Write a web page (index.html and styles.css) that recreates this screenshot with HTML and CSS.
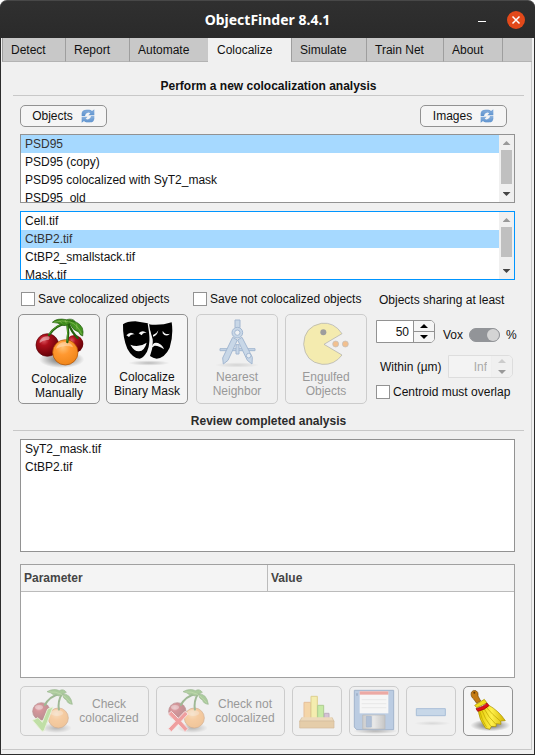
FILE: index.html
```html
<!DOCTYPE html>
<html lang="en">
<head>
<meta charset="utf-8">
<title>ObjectFinder 8.4.1</title>
<link rel="stylesheet" href="styles.css">
</head>
<body>
<svg class="defs" aria-hidden="true">
  <defs>
    <radialGradient id="red" cx=".35" cy=".3" r=".75"><stop offset="0" stop-color="#dc5560"/><stop offset=".3" stop-color="#ad101b"/><stop offset="1" stop-color="#600006"/></radialGradient>
    <radialGradient id="orange" cx=".4" cy=".3" r=".75"><stop offset="0" stop-color="#ffc276"/><stop offset=".4" stop-color="#ff9830"/><stop offset="1" stop-color="#ee8418"/></radialGradient>
    <radialGradient id="shade"><stop offset="0" stop-color="#000" stop-opacity=".6"/><stop offset="1" stop-color="#000" stop-opacity="0"/></radialGradient>
    <linearGradient id="blue" x2="0" y2="1"><stop offset="0" stop-color="#8fb4df"/><stop offset="1" stop-color="#5a90cc"/></linearGradient>
    <linearGradient id="straw"><stop offset="0" stop-color="#e3c800"/><stop offset=".5" stop-color="#fff04a"/><stop offset="1" stop-color="#d3b400"/></linearGradient>
    <linearGradient id="metal"><stop offset="0" stop-color="#999"/><stop offset=".5" stop-color="#ddd"/><stop offset="1" stop-color="#888"/></linearGradient>
  </defs>
  <symbol id="refresh" viewBox="0 0 42 42">
    <path d="M2 21V13Q3 2 15 2h10q5 0 8 4l7-5v18H22l6-6q-4-3-8-2-7 1-8 10z" fill="url(#blue)"/>
    <path d="M40 21v8q-1 11-13 11H17q-5 0-8-4l-7 5V23h18l-6 6q4 3 8 2 7-1 8-10z" fill="url(#blue)"/>
    <path d="M4 15Q6 4 17 4h8q5 1 8 5l5-4M38 28q-2 10-12 10h-9q-5 0-8-5" fill="none" stroke="#6b9bd2" stroke-width="2"/>
  </symbol>
  <symbol id="stems" viewBox="0 0 156 162">
    <path d="M44 57Q62 28 96 22M99 78Q104 50 99 22M130 66Q112 48 102 22" fill="none" stroke="#245f0d" stroke-width="7" stroke-linecap="round"/>
    <path d="M44 55Q62 27 96 21M98 76Q102 50 98 22" fill="none" stroke="#55a32b" stroke-width="3"/>
    <path d="M54 19Q68 5 96 11Q115 6 123 17Q116 20 108 20Q94 34 82 26Q70 20 54 19Z" fill="#3f8c1b" stroke="#215c0c" stroke-width="2"/>
    <path d="M101 15Q132 13 144 36Q148 48 145 60Q136 57 133 48Q116 43 109 27Z" fill="#459522" stroke="#215c0c" stroke-width="2"/>
    <path d="M58 19Q82 11 108 18Q130 26 142 55M75 14l8 8M92 12l4 10M127 23l1 17" fill="none" stroke="#a4cf6c" stroke-width="1.5"/>
  </symbol>
  <symbol id="cherries" viewBox="-4 0 156 162">
    <ellipse cx="82" cy="130" rx="68" ry="26" fill="url(#shade)"/>
    <circle cx="120" cy="84" r="27" fill="url(#red)"/>
    <circle cx="39" cy="87" r="34" fill="url(#red)" stroke="#5a0006" stroke-width="2"/>
    <path d="M16 74Q25 60 42 61Q50 66 42 72Q28 70 16 81Z" fill="#fff" opacity=".45"/>
    <circle cx="93" cy="109" r="38" fill="url(#orange)" stroke="#a84b00" stroke-width="2"/>
    <path d="M65 98Q72 77 94 78Q113 81 116 94Q91 84 65 98Z" fill="#fff" opacity=".35"/>
    <use href="#stems" width="156" height="162"/>
  </symbol>
  <symbol id="cherry-pair" viewBox="0 0 126 132">
    <ellipse cx="76" cy="117" rx="46" ry="15" fill="url(#shade)"/>
    <circle cx="31" cy="67" r="26" fill="url(#red)" stroke="#6d0007" stroke-width="2"/>
    <ellipse cx="24" cy="55" rx="12" ry="7" fill="#fff" opacity=".4"/>
    <circle cx="82" cy="87" r="30" fill="url(#orange)" stroke="#a84b00" stroke-width="2"/>
    <ellipse cx="78" cy="72" rx="19" ry="9" fill="#fff" opacity=".3"/>
    <path d="M40 50Q56 20 89 14M84 64Q79 36 93 15" fill="none" stroke="#28690f" stroke-width="6"/>
    <path d="M48 8Q68-3 85 5Q98-2 106 10Q91 18 84 21Q75 15 67 17Q62 11 48 8ZM94 15Q119 13 124 46Q109 44 107 34Q96 29 94 15Z" fill="#459522" stroke="#28690f" stroke-width="2"/>
    <path d="M55 9Q91 5 119 41" fill="none" stroke="#a4cf6c" stroke-width="1.5"/>
  </symbol>
</svg>

<header class="titlebar">
  <h1 class="title">ObjectFinder 8.4.1</h1>
  <div class="window-buttons">
    <button class="minimize" aria-label="Minimize"></button>
    <button class="close" aria-label="Close"><svg viewBox="0 0 18 18"><path d="M5.500 5.500l7 7m0-7l-7 7" stroke="#fff" stroke-width="1.500"/></svg></button>
  </div>
</header>

<div class="window">
  <nav class="tabs" role="tablist">
    <button class="tab detect" role="tab">Detect</button>
    <button class="tab report" role="tab">Report</button>
    <button class="tab automate" role="tab">Automate</button>
    <button class="tab colocalize selected" role="tab" aria-selected="true">Colocalize</button>
    <button class="tab simulate" role="tab">Simulate</button>
    <button class="tab train" role="tab">Train Net</button>
    <button class="tab about" role="tab">About</button>
    <span class="tab-rest"></span>
  </nav>

  <main class="panel">
    <h2 class="heading">Perform a new colocalization analysis</h2>
    <div class="toolbar">
      <button class="button refresh">Objects<svg><use href="#refresh"/></svg></button>
      <button class="button refresh">Images<svg><use href="#refresh"/></svg></button>
    </div>

    <div class="list short">
      <select size="4" aria-label="Objects">
        <option selected>PSD95</option>
        <option>PSD95 (copy)</option>
        <option>PSD95 colocalized with SyT2_mask</option>
        <option>PSD95_old</option>
      </select>
      <div class="scrollbar" aria-hidden="true"><i class="up"></i><i class="thumb"></i><i class="down"></i></div>
    </div>
    <div class="list short focused">
      <select size="4" aria-label="Images">
        <option>Cell.tif</option>
        <option selected>CtBP2.tif</option>
        <option>CtBP2_smallstack.tif</option>
        <option>Mask.tif</option>
      </select>
      <div class="scrollbar" aria-hidden="true"><i class="up"></i><i class="thumb small"></i><i class="down"></i></div>
    </div>

    <section class="options">
      <div class="actions">
        <div class="group">
          <label class="check"><input type="checkbox">Save colocalized objects</label>
          <div class="pair">
            <button class="button tile low">
              <svg class="cherries"><use href="#cherries"/></svg>
              <span>Colocalize<br>Manually</span>
            </button>
            <button class="button tile">
              <svg viewBox="0 0 156 144">
                <ellipse cx="84" cy="132" rx="62" ry="8" fill="url(#shade)" opacity=".4"/>
                <path d="M82 16Q118 21 152 10Q158 47 146 86Q132 116 107 119Q96 117 87 111Q97 86 95 61Z" fill="#000"/>
                <path d="M6 16Q17 7 43 7L71 11Q82 11 86 17Q90 70 78 98Q67 117 56 119Q34 117 19 89Q5 57 6 16Z" fill="#000"/>
                <path d="M82 13Q90 60 88 83Q82 107 68 118" fill="none" stroke="#f5f5f5" stroke-width="4"/>
                <path d="M16 49Q28 35 41 46Q29 44 24 54ZM53 43Q65 31 77 42Q66 38 62 49ZM96 48Q107 45 112 34Q108 52 96 53ZM125 35Q132 49 147 44Q134 56 125 43ZM28 77Q52 88 77 71Q71 95 54 97Q40 98 28 77ZM92 86Q95 67 111 72Q126 79 129 91Q113 79 101 80Z" fill="#f5f5f5"/>
              </svg>
              <span>Colocalize<br>Binary Mask</span>
            </button>
          </div>
        </div>
        <div class="group second">
          <label class="check"><input type="checkbox">Save not colocalized objects</label>
          <div class="pair">
            <button class="button tile" disabled>
              <svg viewBox="0 0 156 144">
                <ellipse cx="78" cy="138" rx="66" ry="8" fill="url(#shade)" opacity=".5"/>
                <g fill="#8fb3dc" stroke="#3265a4" stroke-width="3">
                  <path d="M27 89h105v6H27z"/>
                  <path d="M65 55L35 117l2 18 14-11 28-61zM93 55l31 60-1 20-14-11-29-61z"/>
                  <path d="M72 3h15v23H72z"/><circle cx="79" cy="41" r="16"/><circle cx="79" cy="41" r="8" fill="#eef3f8"/>
                  <path d="M75 77h9v28h-9z"/><circle cx="113" cy="110" r="7" fill="#dce8f5"/>
                </g>
              </svg>
              <span>Nearest<br>Neighbor</span>
            </button>
            <button class="button tile" disabled>
              <svg viewBox="0 0 156 144">
                <path d="M72 76L126 44Q102 8 64 13Q12 23 11 76Q15 129 66 136Q103 139 126 108Z" fill="#fbe54f" stroke="#444" stroke-width="2"/>
                <circle cx="70" cy="40" r="9" fill="#222"/>
                <circle cx="107" cy="75" r="9" fill="#f57900" stroke="#777" stroke-width="2"/><circle cx="136" cy="75" r="9" fill="#f57900" stroke="#777" stroke-width="2"/>
              </svg>
              <span>Engulfed<br>Objects</span>
            </button>
          </div>
        </div>
      </div>

      <div class="criteria">
        <div class="caption">Objects sharing at least</div>
        <div class="line">
          <div class="spinner"><input type="text" inputmode="numeric" value="50" aria-label="Objects sharing at least"><div class="steps"><button aria-label="Increase"><i class="up"></i></button><button aria-label="Decrease"><i class="down"></i></button></div></div>
          <label class="unit">Vox<input class="switch" type="checkbox" role="switch" checked>%</label>
        </div>
        <div class="line within">
          <label for="within">Within (µm)</label>
          <div class="spinner disabled"><input id="within" type="text" value="Inf" disabled><div class="steps"><button disabled aria-label="Increase distance"><i class="up"></i></button><button disabled aria-label="Decrease distance"><i class="down"></i></button></div></div>
        </div>
        <label class="check"><input type="checkbox">Centroid must overlap</label>
      </div>
    </section>

    <h2 class="heading review">Review completed analysis</h2>
    <div class="list tall">
      <select size="6" aria-label="Completed analysis">
        <option>SyT2_mask.tif</option>
        <option>CtBP2.tif</option>
      </select>
    </div>
    <div class="table-box">
      <table>
        <thead><tr><th scope="col">Parameter</th><th scope="col">Value</th></tr></thead>
        <tbody></tbody>
      </table>
    </div>

    <footer class="footer">
      <button class="button wide" disabled>
        <svg viewBox="0 0 126 132"><use href="#cherry-pair"/><path d="M5 94l16-8 13 14L50 60l16-6-27 71-6 2z" fill="#79c83a" stroke="#d8f0b0" stroke-width="3"/></svg>
        <span>Check<br>colocalized</span>
      </button>
      <button class="button wide" disabled>
        <svg viewBox="0 0 126 132"><use href="#cherry-pair"/><path d="M4 75l9-8 21 21 20-21 9 8-20 22 20 22-9 9-20-22-21 22-9-9 21-22z" fill="#ef2929" stroke="#ffd0d0" stroke-width="3"/></svg>
        <span>Check not<br>colocalized</span>
      </button>
      <button class="button square" disabled aria-label="Chart">
        <svg viewBox="0 0 144 144">
          <path d="M33 46h20v52H33z" fill="#fcaf3e" stroke="#d9791b" stroke-width="3"/><path d="M54 28h19v70H54z" fill="#fce94f" stroke="#c4a000" stroke-width="3"/><path d="M74 55h18v43H74z" fill="#8ae234" stroke="#4e9a06" stroke-width="3"/><path d="M94 79h14v18H94z" fill="#ad7fa8" stroke="#75507b" stroke-width="3"/>
          <path d="M27 91l-7 12h103l-6-12" fill="#e9b96e" stroke="#a46b1a" stroke-width="2"/><path d="M20 102h103v21H20z" fill="#d79a42" stroke="#a46b1a" stroke-width="2"/>
        </svg>
      </button>
      <button class="button square" disabled aria-label="Save">
        <svg viewBox="0 0 144 144">
          <ellipse cx="76" cy="132" rx="66" ry="9" fill="url(#shade)"/>
          <path d="M13 10h118v118H20l-7-8z" fill="#6e98cf" stroke="#315d98" stroke-width="3"/>
          <path d="M29 13h86v66H29z" fill="#fff"/><path d="M29 13h86v10H29z" fill="#e84234"/><path d="M35 38h74M35 50h74M35 62h74" stroke="#ccc" stroke-width="2"/>
          <path d="M38 84h67v42H38z" fill="url(#metal)" stroke="#666" stroke-width="2"/><path d="M49 88h15v32H49z" fill="#5279b4" stroke="#315d98" stroke-width="2"/><path d="M18 19h6v7h-6z" fill="#315d98"/>
        </svg>
      </button>
      <button class="button square" disabled aria-label="Remove">
        <svg viewBox="0 0 144 144"><ellipse cx="76" cy="109" rx="54" ry="7" fill="url(#shade)" opacity=".4"/><path d="M28 65h87v21H28z" fill="#8bb4de" stroke="#3f75b3" stroke-width="3"/></svg>
      </button>
      <button class="button square" aria-label="Clear">
        <svg viewBox="0 0 144 144">
          <ellipse cx="79" cy="115" rx="60" ry="18" fill="url(#shade)"/>
          <path d="M22 16Q26 8 36 11Q44 15 42 27L50 42 38 49 29 36Q19 29 22 16Z" fill="#c57b13" stroke="#704205" stroke-width="2"/><circle cx="31" cy="17" r="3" fill="#5d3604"/>
          <path d="M32 55L61 37 69 48 38 62Z" fill="#f1df1d" stroke="#a48c00" stroke-width="2"/>
          <path d="M42 68L73 54Q104 71 124 101L110 102 111 112 97 110 96 119 82 118 78 127 65 124Q45 98 42 68Z" fill="url(#straw)" stroke="#a48c00" stroke-width="2"/>
          <path d="M47 72Q53 100 68 121M54 70Q62 95 80 117M61 66Q73 91 95 111M68 62Q84 82 109 102" fill="none" stroke="#baa000" stroke-width="2"/>
          <path d="M36 65Q60 59 69 48L75 56Q62 69 41 73Z" fill="#df1017" stroke="#8e0005" stroke-width="2"/>
        </svg>
      </button>
    </footer>
  </main>
</div>
</body>
</html>
```
FILE: styles.css
```css
* { box-sizing: border-box; }

body {
  display: flex;
  flex-direction: column;
  min-height: 100vh;
  margin: 0;
  background: #f0f0f0;
  color: #111;
  font: 12px/14px "Liberation Sans", Arial, sans-serif;
}

button, input, select { font: inherit; color: inherit; }
button { padding: 0; }
svg { display: block; flex: none; }
.defs { position: absolute; width: 0; height: 0; }

/* Title bar */
.titlebar {
  display: grid;
  grid-template-columns: 1fr auto 1fr;
  align-items: center;
  height: 38px;
  border-top: 1px solid #484848;
  border-radius: 7px 7px 0 0;
  background: linear-gradient(#303030, #2a2a2a);
  color: #fff;
  box-shadow: 0 -8px 0 #fff;
}
.title {
  grid-column: 2;
  margin: 0;
  font: bold 14px/20px "Noto Sans", sans-serif;
}
.window-buttons {
  display: flex;
  align-items: center;
  justify-content: flex-end;
  gap: 21px;
  padding-right: 10px;
}
.window-buttons button { border: 0; background: none; }
.window-buttons .minimize { width: 8px; height: 1px; margin-top: 4px; background: #fff; }
.window-buttons .close { border-radius: 50%; background: #e2491a; }
.close svg { width: 18px; height: 18px; }

.window {
  display: flex;
  flex: 1;
  flex-direction: column;
  padding: 0 2px 4px 1px;
  border: solid #2c2c2c;
  border-width: 0 1px 1px;
}

/* Tabs */
.tabs { display: flex; height: 24px; }
.tab, .tab-rest {
  border: solid #9e9e9e;
  border-width: 0 0 1px 1px;
  border-bottom-color: #b3b3b3;
  background: #c8c8c8;
}
.tab {
  flex: none;
  padding: 0 0 0 8px;
  text-align: left;
}
.tab.selected { border-color: #f0f0f0; background: #f0f0f0; }
.detect { width: 63px; }
.report { width: 64px; }
.automate { width: 79px; }
.colocalize { width: 83px; }
.simulate { width: 75px; }
.train { width: 77px; }
.about { width: 59px; }
.tab-rest { flex: 1; }

/* Panel */
.panel {
  flex: 1;
  padding: 15px 16px 12px 18px;
  border: solid #c8c8c8;
  border-width: 0 1px 1px 0;
}
.heading {
  margin: 0 -9px 0 -7px;
  padding: 2px 0;
  border-bottom: 1px solid #c8c8c8;
  font-size: 12px;
  line-height: 14px;
  text-align: center;
}
.heading.review { margin-top: 8px; color: #2b2b2b; }

.button {
  border: 1px solid #929292;
  border-radius: 5px;
  background: #f5f5f5;
}
.button:disabled { border-color: #ccc; background: #f0f0f0; color: #999; }
.button:disabled svg { opacity: .4; }

.toolbar {
  display: flex;
  justify-content: space-between;
  padding: 9px 8px 7px 0;
}
.refresh {
  display: flex;
  align-items: center;
  justify-content: center;
  gap: 8px;
  width: 87px;
  height: 22px;
}
.refresh svg { width: 14px; height: 14px; }

/* Lists */
.list {
  display: flex;
  border: 1px solid #929292;
  background: #fff;
}
.list.short { height: 69px; }
.list.tall { height: 113px; margin-top: 8px; }
.list.focused { margin-top: 8px; border-color: #0095ff; }
.list select {
  flex: 1;
  height: 100%;
  padding: 0;
  border: 0;
  border-radius: 0;
  outline: 0;
  background: #fff;
  overflow: hidden;
  scrollbar-width: none;
}
.list option {
  height: 18px;
  min-height: 18px;
  padding: 2px 4px;
  line-height: 14px;
  color: #111;
}
.list option:checked {
  background: #a6d9ff linear-gradient(#a6d9ff, #a6d9ff);
  color: #333;
}
.scrollbar {
  display: flex;
  flex-direction: column;
  align-items: center;
  width: 15px;
  padding: 6px 0;
  background: #f0f0f0;
}
.scrollbar .thumb { width: 11px; height: 34px; margin-top: 5px; background: #c0c0c0; }
.scrollbar .thumb.small { height: 30px; }
.scrollbar .down { margin-top: auto; }
.up, .down { width: 8px; height: 4px; background: #444; }
.up { clip-path: polygon(50% 0, 100% 100%, 0 100%); }
.down { clip-path: polygon(0 0, 100% 0, 50% 100%); }
.scrollbar .up { background: #999; }

/* Options */
.options { display: flex; gap: 9px; margin: 12px 0 0 -2px; }
.actions {
  display: grid;
  flex: 1;
  grid-template-columns: 170fr 174fr;
  gap: 5px;
}
.group .check { padding-left: 3px; }
.group.second .check { padding-left: 0; }
.group.second .pair { gap: 7px; padding-left: 3px; }
.check { display: flex; align-items: center; gap: 3px; white-space: nowrap; }
.check input {
  width: 14px;
  height: 14px;
  margin: 0;
  border: 1px solid #929292;
  background: #fff;
  appearance: none;
}
.pair { display: flex; gap: 6px; margin-top: 8px; }
.tile {
  display: flex;
  flex: 1;
  flex-direction: column;
  align-items: center;
  justify-content: space-between;
  height: 90px;
  padding: 4px 0 5px;
  white-space: nowrap;
}
.tile.low { padding-bottom: 3px; }
.tile svg { width: 52px; height: 48px; }
.tile .cherries { height: 54px; margin: -3px 0 -4px; }

.criteria { width: 139px; }
.caption { padding: 1px 3px 0; }
.line { display: flex; align-items: center; gap: 8px; margin-top: 13px; }
.line.within { gap: 6px; margin: 12px 2px 7px 4px; }
.line.within .spinner { flex: 1; }
.spinner {
  display: flex;
  width: 59px;
  height: 23px;
  border: 1px solid #929292;
  border-radius: 0 5px 5px 0;
  background: #fff;
}
.spinner input {
  flex: 1;
  min-width: 0;
  padding: 0 4px;
  border: 0;
  background: none;
  text-align: right;
}
.steps {
  display: flex;
  flex-direction: column;
  width: 21px;
  border-left: 1px solid #929292;
  border-radius: 0 4px 4px 0;
  background: #f5f5f5;
}
.steps button {
  display: grid;
  flex: 1;
  place-items: center;
  border: 0;
  background: none;
}
.steps button + button { border-top: 1px solid #929292; }
.steps .up, .steps .down { background: #000; }
.spinner.disabled { border-color: #ddd; background: #f3f3f3; color: #aaa; }
.spinner.disabled .steps { border-color: #eee; background: #f0f0f0; }
.spinner.disabled button { border-color: #f0f0f0; }
.spinner.disabled .up { background: #ccc; }
.spinner.disabled .down { background: #999; }

.unit { display: flex; align-items: center; gap: 6px; padding-top: 6px; }
.switch {
  display: flex;
  justify-content: flex-end;
  width: 31px;
  height: 14px;
  margin: 0;
  border: 1px solid #929498;
  border-radius: 7px;
  background: #929498;
  appearance: none;
}
.switch::before { width: 12px; height: 12px; border-radius: 50%; background: #d4d4d4; content: ""; }

/* Results table */
.table-box {
  height: 114px;
  margin-top: 12px;
  border: 1px solid #a0a0a0;
  background: #fff;
}
table { width: 100%; border-collapse: collapse; table-layout: fixed; }
th {
  height: 26px;
  padding: 0 3px;
  border-bottom: 1px solid #bbb;
  background: #f4f4f4;
  color: #444;
  text-align: left;
}
th + th { border-left: 1px solid #bbb; }

/* Footer */
.footer { display: flex; gap: 7px; padding: 8px 2px 0 0; }
.footer .button { display: flex; align-items: center; height: 50px; }
.wide { flex: 1; padding: 0 3px 0 10px; }
.wide svg { width: 42px; height: 44px; }
.wide span { flex: 1; text-align: center; }
.square { justify-content: center; width: 50px; }
.square svg { width: 48px; height: 48px; }
```
